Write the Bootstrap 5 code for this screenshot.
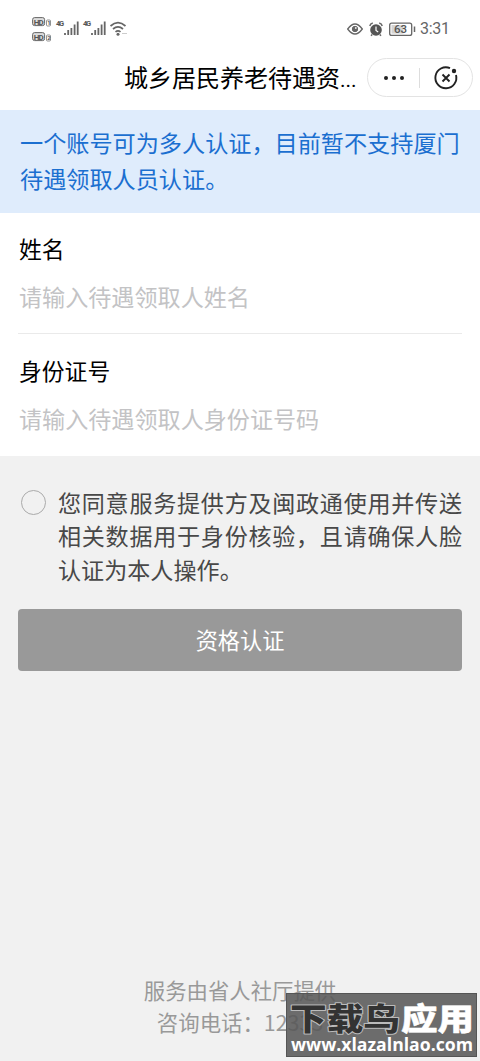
<!DOCTYPE html>
<html lang="zh-CN">
<head>
<meta charset="utf-8">
<meta name="viewport" content="width=device-width, initial-scale=1">
<title>城乡居民养老待遇资格认证</title>
<link href="https://cdn.jsdelivr.net/npm/bootstrap@5.3.0/dist/css/bootstrap.min.css" rel="stylesheet">
<style>
body{font-family:"Noto Sans CJK SC",sans-serif;font-size:23px;color:#000;background:#fff;overflow:hidden}
.screen{height:1061px}
.status{height:52px;padding:6px 32px 0;color:#666}
.status-right{margin-top:-1px}
.clock{font:16px/20px Roboto,sans-serif;width:28px;white-space:nowrap;letter-spacing:-.3px}
.titlebar{height:58px;padding-right:7px;padding-left:124px}
.page-title{font-size:24px;line-height:36px;width:236px;white-space:nowrap;margin-top:-5px}
.page-title span{font-family:Roboto,sans-serif;font-size:21px}
.capsule{width:106px;height:39px;border:1px solid #e3e3e3;margin-top:-7px;gap:13px}
.capsule i{width:1px;height:20px;background:#ddd}
.notice{height:103px;padding:15px 18px 0 20px;background:#dfecfc;color:#1b6fd0;font-size:23.15px;line-height:35.5px}
.fieldrow{height:122px;padding-top:20px;margin:0 18px}
.fieldrow.first{height:121px;padding-top:19px}
.fieldrow.border-bottom{border-color:#eaeaea!important}
.fieldrow label{line-height:34px;font-size:22.8px;padding-left:1px;display:block}
.fieldrow input{font-size:23.1px;line-height:34px;height:34px;padding:0 0 0 1px;margin-top:12.5px;color:#333}
.fieldrow input::placeholder{color:#c3c3c5;opacity:1}
.lower{background:#f1f1f1;padding:30px 18px 0}
.agree{padding-left:3px}
.agree .form-check-input{width:25px;height:25px;margin:4px 12px 0 0;border:1px solid #aaa;background-color:transparent;flex:none}
.agree label{width:405px;line-height:33.3px;font-size:23.1px;color:#484848;text-align:justify}
.submit,.submit:disabled{height:62px;margin-top:23px;background:#999;border:0;border-radius:4px;color:#fff;font-size:22.2px;opacity:1}
.credit{font-size:21.4px;line-height:32px;color:#999;padding-bottom:23px}
.stamp{right:3px;bottom:4px;width:191px;height:64px;background:rgba(87,87,87,.87);border:1px solid #555}
.stamp svg{display:block;overflow:visible}
</style>
</head>
<body>
<div class="screen d-flex flex-column position-relative">
  <header class="status d-flex align-items-center justify-content-between">
    <svg width="98" height="30" viewBox="0 0 98 30" fill="none" stroke="#666">
      <rect x=".6" y="3.6" width="12" height="8" rx="2" fill="#ddd"/>
      <rect x=".6" y="18.6" width="12" height="8" rx="2" fill="#ddd"/>
      <g fill="#555" stroke="none" font-family="Roboto,sans-serif" font-weight="700">
        <text x="1.8" y="10.5" font-size="8" textLength="9.8">HD</text>
        <text x="1.8" y="25.5" font-size="8" textLength="9.8">HD</text>
        <text x="15.2" y="11" font-size="6">1</text><text x="15.2" y="26" font-size="6">2</text>
        <text x="24" y="12" font-size="7.5" textLength="8">4G</text>
        <text x="51" y="12" font-size="7.5" textLength="8">4G</text>
      </g>
      <rect x="14.5" y="6" width="4" height="6" rx="1" stroke-width=".7"/>
      <rect x="14.5" y="21" width="4" height="6" rx="1" stroke-width=".7"/>
      <path d="M33 21v-2M36.2 21v-5M39.4 21v-7M42.6 21V10.500M45.700 21V7.500M60 21v-2M63.2 21v-5M66.400 21v-7M69.600 21V10.500M72.700 21V7.500" stroke-width="1.8"/>
      <path d="M78.500 12q7.500-6.800 15 0M81 15q5-4.400 10 0M83.500 17.800q2.500-2 5 0" stroke-width="1.7"/>
      <circle cx="86" cy="20.300" r="1.500" fill="#666" stroke="none"/>
      <path d="M90 19.500h5" stroke="#ccc" stroke-width="1"/>
    </svg>
    <div class="status-right d-flex align-items-center">
      <svg width="73" height="24" viewBox="0 0 73 24" fill="none" stroke="#666">
        <path d="M.7 12q7.300-10 14.600 0q-7.300 10-14.600 0z" stroke-width="1.300"/>
        <circle cx="8" cy="12" r="2.700" fill="#666"/><circle cx="8.800" cy="11" r=".9" fill="#eee" stroke="none"/>
        <circle cx="29" cy="13" r="5.800" fill="#555" stroke="none"/>
        <path d="M22.800 9q.5-2.500 3-3M32.200 6q2.500.5 3 3M25.200 17.500l-1.200 1.300M32.800 17.500l1.200 1.300" stroke-width="1.500"/>
        <path d="M29 9.500V13.500l2.200 1.500" stroke="#fff" stroke-width="1.200"/>
        <rect x="42.700" y="6.200" width="22" height="12.200" rx="2" stroke-width="1.300"/>
        <rect x="44.500" y="8" width="12" height="8.600" fill="#d4d4d4" stroke="none"/>
        <text x="47" y="16.300" font-size="11.500" font-family="Roboto,sans-serif" font-weight="500" fill="#555" stroke="none">63</text>
        <path d="M67.500 9.500v5.500" stroke-width="1.500"/>
      </svg>
      <span class="clock">3:31</span>
    </div>
  </header>

  <nav class="titlebar d-flex align-items-center justify-content-between">
    <h1 class="page-title mb-0 fw-normal">城乡居民养老待遇资<span>...</span></h1>
    <div class="capsule rounded-pill d-flex align-items-center justify-content-center">
      <svg width="24" height="24" viewBox="0 0 24 24" fill="#222"><circle cx="4" cy="12" r="2"/><circle cx="12" cy="12" r="2"/><circle cx="20" cy="12" r="2"/></svg>
      <i></i>
      <svg width="26" height="26" viewBox="0 0 26 26" fill="none" stroke="#222" stroke-width="1.900"><path d="M17 3.100A10.500 10.500 0 1 0 23 10"/><path d="M9.500 9.500l7 7M16.500 9.500l-7 7"/><circle cx="21" cy="6" r="2.200" fill="#222" stroke="none"/></svg>
    </div>
  </nav>

  <div class="notice">一个账号可为多人认证，目前暂不支持厦门待遇领取人员认证。</div>

  <main class="d-flex flex-column flex-grow-1">
    <div class="fieldrow first border-bottom">
      <label for="realname">姓名</label>
      <input id="realname" class="form-control-plaintext" placeholder="请输入待遇领取人姓名">
    </div>
    <div class="fieldrow">
      <label for="idcard">身份证号</label>
      <input id="idcard" class="form-control-plaintext" placeholder="请输入待遇领取人身份证号码">
    </div>
    <section class="lower flex-grow-1 d-flex flex-column">
      <div class="agree d-flex">
        <input id="agree" class="form-check-input" type="radio">
        <label for="agree">您同意服务提供方及闽政通使用并传送相关数据用于身份核验，且请确保人脸认证为本人操作。</label>
      </div>
      <button class="btn submit w-100" disabled>资格认证</button>
      <footer class="credit mt-auto text-center">服务由省人社厅提供<br>咨询电话：12333</footer>
    </section>
  </main>

  <div class="stamp position-absolute">
    <svg width="189" height="62" viewBox="0 0 189 62" font-weight="900" font-family="Noto Sans CJK SC,sans-serif">
      <g font-size="31" stroke-linejoin="round" paint-order="stroke">
        <text x="3" y="36" textLength="110" lengthAdjust="spacingAndGlyphs" fill="#333" stroke="#bbb" stroke-width="2">下载鸟</text>
        <text x="114" y="36" textLength="73" lengthAdjust="spacingAndGlyphs" fill="#fff" stroke="#fff" stroke-width=".5">应用</text>
      </g>
      <text x="4" y="57" font-size="17" font-family="Open Sans,sans-serif" font-weight="700" textLength="182" lengthAdjust="spacingAndGlyphs" fill="#fff">www.xlazalnlao.com</text>
    </svg>
  </div>
</div>
<script src="https://cdn.jsdelivr.net/npm/bootstrap@5.3.0/dist/js/bootstrap.bundle.min.js"></script>
</body>
</html>
